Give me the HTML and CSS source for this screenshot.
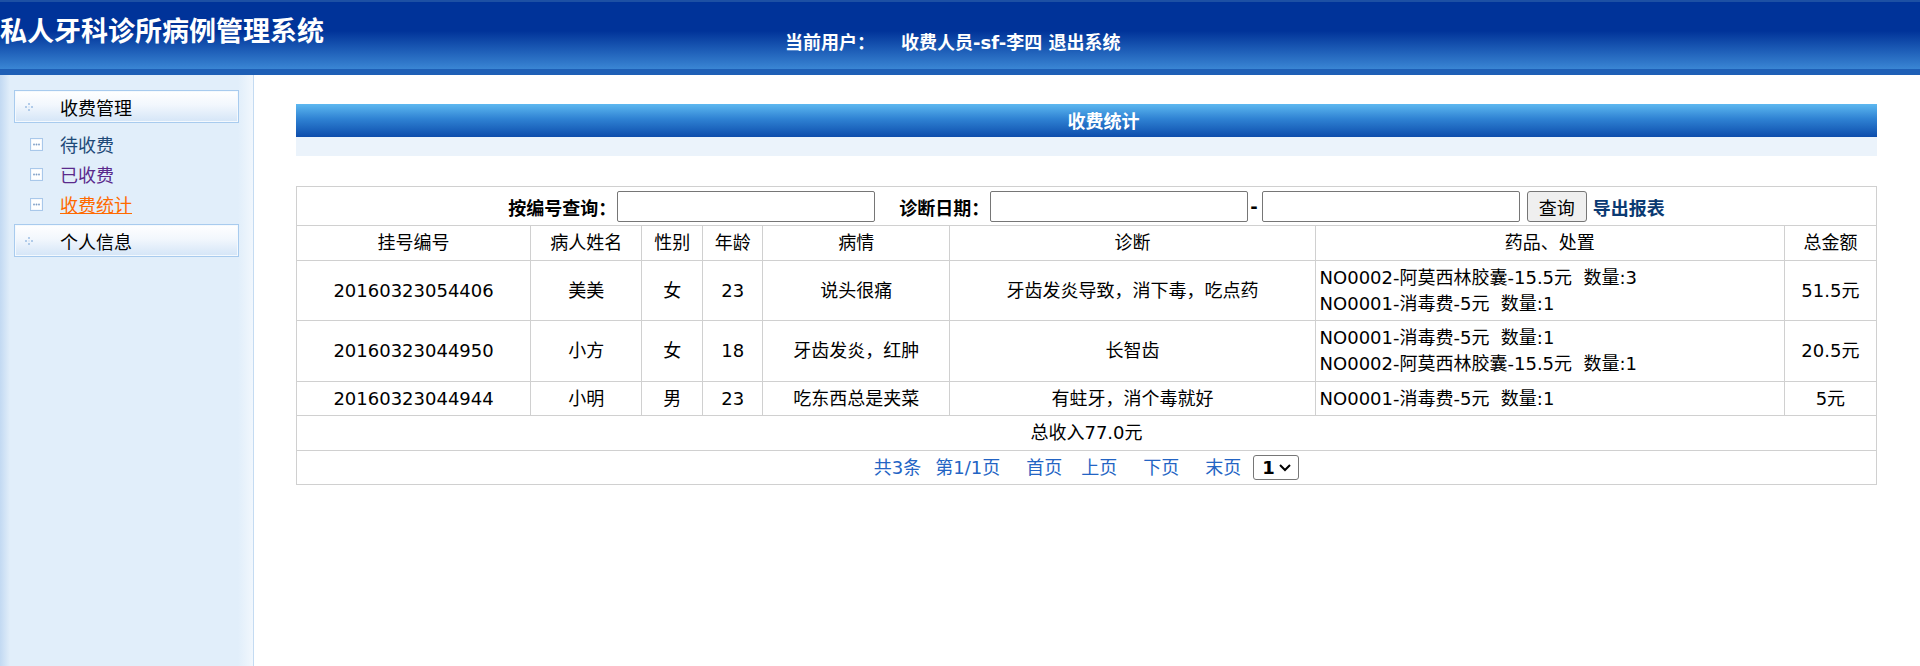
FILE: index.html
```html
<!DOCTYPE html>
<html lang="zh-CN">
<head>
    <meta charset="UTF-8">
    <title>私人牙科诊所病例管理系统</title>
    <link rel="stylesheet" href="styles.css">
</head>
<body>
    <div class="header">
        <div class="brand">私人牙科诊所病例管理系统</div>
        <div class="user">
            <span>当前用户：</span>
            <span class="user-name">收费人员-sf-李四 <a href="#">退出系统</a></span>
        </div>
    </div>

    <div class="container">
        <div class="sidebar">
            <div class="menu-title">
                <svg class="dots" width="8" height="8" viewBox="0 0 8 8">
                    <circle cx="4" cy="1" r="1" fill="#9cbee3"/>
                    <circle cx="1" cy="4" r="1" fill="#9cbee3"/>
                    <circle cx="7" cy="4" r="1" fill="#9cbee3"/>
                    <circle cx="4" cy="7" r="1" fill="#9cbee3"/>
                    <circle cx="4" cy="4" r="0.8" fill="#cfe0f3"/>
                </svg>
                收费管理
            </div>
            <ul class="menu-list">
                <li>
                    <svg class="item-icon" width="13" height="13" viewBox="0 0 13 13">
                        <rect x="0.5" y="0.5" width="12" height="12" fill="#f4f8fd" stroke="#a9c8ea"/>
                        <rect x="2" y="2" width="9" height="9" fill="#ffffff"/>
                        <circle cx="4" cy="6.5" r="0.9" fill="#7e9ec6"/>
                        <circle cx="6.5" cy="6.5" r="0.9" fill="#7e9ec6"/>
                        <circle cx="9" cy="6.5" r="0.9" fill="#7e9ec6"/>
                    </svg>
                    <a href="#" class="link-wait">待收费</a>
                </li>
                <li>
                    <svg class="item-icon" width="13" height="13" viewBox="0 0 13 13">
                        <rect x="0.5" y="0.5" width="12" height="12" fill="#f4f8fd" stroke="#a9c8ea"/>
                        <rect x="2" y="2" width="9" height="9" fill="#ffffff"/>
                        <circle cx="4" cy="6.5" r="0.9" fill="#7e9ec6"/>
                        <circle cx="6.5" cy="6.5" r="0.9" fill="#7e9ec6"/>
                        <circle cx="9" cy="6.5" r="0.9" fill="#7e9ec6"/>
                    </svg>
                    <a href="#" class="link-done">已收费</a>
                </li>
                <li>
                    <svg class="item-icon" width="13" height="13" viewBox="0 0 13 13">
                        <rect x="0.5" y="0.5" width="12" height="12" fill="#f4f8fd" stroke="#a9c8ea"/>
                        <rect x="2" y="2" width="9" height="9" fill="#ffffff"/>
                        <circle cx="4" cy="6.5" r="0.9" fill="#7e9ec6"/>
                        <circle cx="6.5" cy="6.5" r="0.9" fill="#7e9ec6"/>
                        <circle cx="9" cy="6.5" r="0.9" fill="#7e9ec6"/>
                    </svg>
                    <a href="#" class="link-active">收费统计</a>
                </li>
            </ul>
            <div class="menu-title">
                <svg class="dots" width="8" height="8" viewBox="0 0 8 8">
                    <circle cx="4" cy="1" r="1" fill="#9cbee3"/>
                    <circle cx="1" cy="4" r="1" fill="#9cbee3"/>
                    <circle cx="7" cy="4" r="1" fill="#9cbee3"/>
                    <circle cx="4" cy="7" r="1" fill="#9cbee3"/>
                    <circle cx="4" cy="4" r="0.8" fill="#cfe0f3"/>
                </svg>
                个人信息
            </div>
        </div>

        <div class="main">
            <div class="page-title">收费统计</div>
            <div class="title-band"></div>

            <table class="list">
                <colgroup>
                    <col style="width:234px">
                    <col style="width:111px">
                    <col style="width:61px">
                    <col style="width:60px">
                    <col style="width:187px">
                    <col style="width:365px">
                    <col style="width:469px">
                    <col style="width:92px">
                </colgroup>
                <tr>
                    <td colspan="8" class="search-cell">
                        <form class="search">
                            <label>按编号查询：</label>
                            <input type="text" class="search-input">
                            <label class="date-label">诊断日期：</label>
                            <input type="text" class="search-input">
                            <span class="dash">-</span>
                            <input type="text" class="search-input">
                            <button type="button" class="search-btn">查询</button>
                            <a href="#" class="export">导出报表</a>
                        </form>
                    </td>
                </tr>
                <tr>
                    <td>挂号编号</td>
                    <td>病人姓名</td>
                    <td>性别</td>
                    <td>年龄</td>
                    <td>病情</td>
                    <td>诊断</td>
                    <td>药品、处置</td>
                    <td>总金额</td>
                </tr>
                <tr>
                    <td>20160323054406</td>
                    <td>美美</td>
                    <td>女</td>
                    <td>23</td>
                    <td>说头很痛</td>
                    <td>牙齿发炎导致，消下毒，吃点药</td>
                    <td class="drugs">NO0002-阿莫西林胶囊-15.5元&nbsp;&nbsp;数量:3<br>NO0001-消毒费-5元&nbsp;&nbsp;数量:1</td>
                    <td>51.5元</td>
                </tr>
                <tr>
                    <td>20160323044950</td>
                    <td>小方</td>
                    <td>女</td>
                    <td>18</td>
                    <td>牙齿发炎，红肿</td>
                    <td>长智齿</td>
                    <td class="drugs">NO0001-消毒费-5元&nbsp;&nbsp;数量:1<br>NO0002-阿莫西林胶囊-15.5元&nbsp;&nbsp;数量:1</td>
                    <td>20.5元</td>
                </tr>
                <tr>
                    <td>20160323044944</td>
                    <td>小明</td>
                    <td>男</td>
                    <td>23</td>
                    <td>吃东西总是夹菜</td>
                    <td>有蛀牙，消个毒就好</td>
                    <td class="drugs">NO0001-消毒费-5元&nbsp;&nbsp;数量:1</td>
                    <td>5元</td>
                </tr>
                <tr>
                    <td colspan="8">总收入77.0元</td>
                </tr>
                <tr>
                    <td colspan="8" class="pager-cell">
                        <div class="pager">
                            <span>共3条</span>
                            <span class="page-no">第1/1页</span>
                            <a href="#" class="first">首页</a>
                            <a href="#" class="gap-s">上页</a>
                            <a href="#" class="gap-l">下页</a>
                            <a href="#" class="gap-l">末页</a>
                            <span class="page-select">
                                1
                                <svg width="14" height="9" viewBox="0 0 14 9">
                                    <path d="M2 2 L7 7 L12 2" fill="none" stroke="#000" stroke-width="2"/>
                                </svg>
                            </span>
                        </div>
                    </td>
                </tr>
            </table>
        </div>
    </div>
</body>
</html>
```

FILE: styles.css
```css
* {
    margin: 0;
    padding: 0;
    box-sizing: border-box;
}
html, body {
    height: 100%;
}
body {
    display: flex;
    flex-direction: column;
    font-family: "DejaVu Sans", "Noto Sans CJK SC", sans-serif;
    font-size: 18px;
    color: #000;
    background: #fff;
}
a {
    text-decoration: none;
}

/* header */
.header {
    display: flex;
    height: 75px;
    color: #fff;
    font-weight: bold;
    background: linear-gradient(#1d50a4 0, #1d50a4 2px, #003399 2px, #003399 31px, #3a86d4 69px, #1e5fb6 69px, #1e5fb6 75px);
}
.brand {
    width: 785px;
    padding-top: 15px;
    font-size: 27px;
    line-height: 30px;
    font-family: "Noto Sans CJK SC", sans-serif;
}
.user {
    display: flex;
    padding-top: 32px;
    line-height: 22px;
    font-size: 18px;
}
.user-name {
    margin-left: 26px;
}
.user a {
    color: #fff;
}

/* sidebar */
.container {
    flex: 1;
    display: flex;
}
.sidebar {
    width: 254px;
    flex-shrink: 0;
    padding: 15px 14px 0 14px;
    border-right: 1px solid #c4dbf2;
    background: linear-gradient(90deg, #c2d9f2 0, #e1eefa 10px, #e1eefa 238px, #f1f7fd 253px);
}
.menu-title {
    display: flex;
    align-items: center;
    height: 33px;
    padding-left: 10px;
    border: 1px solid #a8cbee;
    box-shadow: inset 0 0 0 1px #f4f9fe;
    background: linear-gradient(#ffffff, #f2f7fd 45%, #d4e5f7);
    font-family: "Noto Sans CJK SC", sans-serif;
    font-size: 18px;
}
.menu-title .dots {
    margin-right: 27px;
}
.menu-list {
    list-style: none;
    padding: 6px 0 5px 16px;
}
.menu-list li {
    display: flex;
    align-items: center;
    height: 30px;
    font-family: "Noto Sans CJK SC", sans-serif;
}
.item-icon {
    margin-right: 17px;
}
.link-wait {
    color: #1f4a78;
}
.link-done {
    color: #5a2a8c;
}
.link-active {
    color: #ff6a00;
    text-decoration: underline;
}

/* main */
.main {
    flex: 1;
    padding: 29px 43px 0 42px;
}
.page-title {
    height: 33px;
    line-height: 33px;
    padding-left: 34px;
    text-align: center;
    color: #fff;
    font-weight: bold;
    font-family: "Noto Sans CJK SC", sans-serif;
    background: linear-gradient(#5db8f0, #2f82d3 45%, #0d4dac);
}
.title-band {
    height: 19px;
    background: #ebf3fb;
    margin-bottom: 30px;
}

.list {
    width: 100%;
    border-collapse: collapse;
    table-layout: fixed;
}
.list td {
    border: 1px solid #d0d0d0;
    text-align: center;
    line-height: 26px;
    padding: 4px 4px 3.5px;
    white-space: nowrap;
}
.list td.drugs {
    text-align: left;
}
.list td.search-cell {
    padding: 4px 0 3px 0;
}
.search {
    display: flex;
    justify-content: center;
    align-items: center;
    height: 31px;
    font-weight: bold;
}
.search label {
    font-family: "Noto Sans CJK SC", sans-serif;
}
.search-input {
    width: 258px;
    height: 31px;
    margin-left: 1px;
    border: 1px solid #767676;
    border-radius: 2px;
    font-size: 16px;
}
.date-label {
    margin-left: 24px;
}
.dash {
    margin: 0 3px 0 2px;
}
.search-btn {
    width: 60px;
    height: 31px;
    margin-left: 7px;
    border: 1px solid #767676;
    border-radius: 3px;
    background: #efefef;
    font-family: "Noto Sans CJK SC", sans-serif;
    font-size: 18px;
    font-weight: normal;
    color: #000;
}
.export {
    margin-left: 6px;
    color: #0b3a72;
    font-family: "Noto Sans CJK SC", sans-serif;
}

.pager {
    display: flex;
    justify-content: center;
    align-items: center;
    color: #2364c4;
}
.pager a {
    color: #2364c4;
}
.page-no {
    margin-left: 14px;
}
.first {
    margin-left: 26px;
}
.gap-s {
    margin-left: 19px;
}
.gap-l {
    margin-left: 26px;
}
.page-select {
    display: flex;
    align-items: center;
    justify-content: space-between;
    width: 46px;
    height: 25px;
    margin-left: 12px;
    padding: 0 6px 0 8px;
    border: 1px solid #767676;
    border-radius: 3px;
    font-weight: bold;
    line-height: 23px;
    color: #000;
    background: #fff;
}
```
